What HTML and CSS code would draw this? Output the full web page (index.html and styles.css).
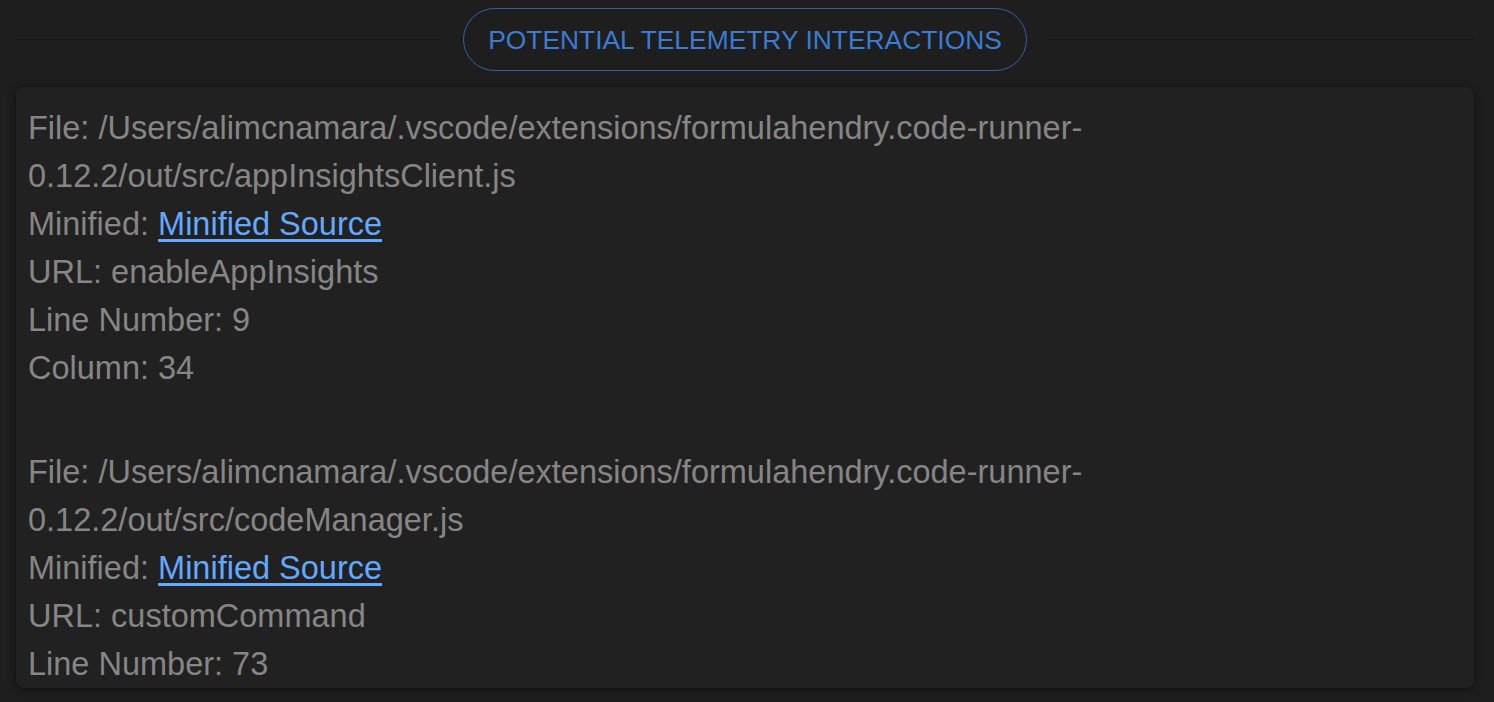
FILE: index.html
```html
<!DOCTYPE html>
<html lang="en">
<head>
<meta charset="utf-8">
<title>Potential Telemetry Interactions</title>
<link rel="stylesheet" href="styles.css">
</head>
<body>
<main class="panel">
  <header class="section-head">
    <span class="rule"></span>
    <span class="chip">POTENTIAL TELEMETRY INTERACTIONS</span>
    <span class="rule"></span>
  </header>
  <section class="card">
    <div class="entry">
      <div class="line">File: /Users/alimcnamara/.vscode/extensions/formulahendry.code-runner-0.12.2/out/src/appInsightsClient.js</div>
      <div class="line">Minified: <a class="link" href="#">Minified Source</a></div>
      <div class="line">URL: enableAppInsights</div>
      <div class="line">Line Number: 9</div>
      <div class="line">Column: 34</div>
    </div>
    <div class="entry">
      <div class="line">File: /Users/alimcnamara/.vscode/extensions/formulahendry.code-runner-0.12.2/out/src/codeManager.js</div>
      <div class="line">Minified: <a class="link" href="#">Minified Source</a></div>
      <div class="line">URL: customCommand</div>
      <div class="line">Line Number: 73</div>
    </div>
  </section>
</main>
</body>
</html>
```

FILE: styles.css
```css
html, body {
  margin: 0;
  padding: 0;
  background: #1e1e1e;
  height: 100%;
  overflow: hidden;
}

body {
  font-family: "Liberation Sans", Arial, sans-serif;
}

.panel {
  padding: 8px 20px 0 16px;
  display: flex;
  flex-direction: column;
  gap: 16px;
}

.section-head {
  display: flex;
  align-items: center;
  gap: 20px;
}

.rule {
  flex: 1;
  height: 1px;
  background: #171717;
}

.chip {
  box-sizing: border-box;
  height: 63px;
  padding: 2px 24px 0;
  display: flex;
  align-items: center;
  border: 1.5px solid #3063a5;
  border-radius: 32px;
  color: #3b7bd2;
  font-size: 26.4px;
  white-space: nowrap;
}

.card {
  box-sizing: border-box;
  height: 601px;
  overflow: hidden;
  background: #212121;
  border-radius: 8px;
  box-shadow: 0 2px 8px rgba(0, 0, 0, 0.45);
  padding: 17px 12px;
  color: #878585;
  font-size: 32.5px;
  line-height: 48px;
  display: flex;
  flex-direction: column;
  gap: 56px;
}

.line {
  max-width: 1100px;
}

.link {
  color: #62a9ff;
  text-decoration: underline;
  text-underline-offset: 4px;
}
```
